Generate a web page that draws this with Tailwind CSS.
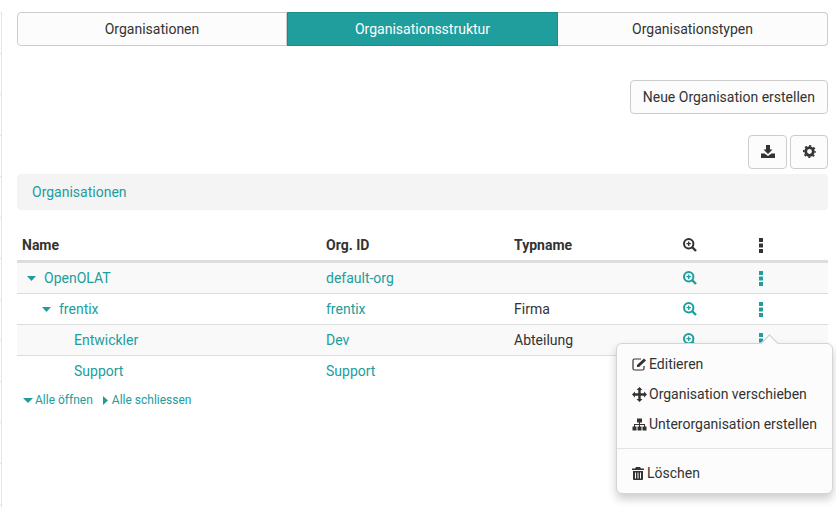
<!doctype html>
<html>

<head>
  <meta charset="UTF-8">
  <script src="https://cdn.jsdelivr.net/npm/@tailwindcss/browser@4"></script>
</head>

<body class="w-[836px] h-[508px] overflow-hidden bg-white font-['Roboto',sans-serif] text-sm text-[#333]">
  <div class="relative h-full flex">
    <!-- left sidebar edge, cut off by the crop -->
    <div class="w-0.5 h-full pt-3 shrink-0">
      <div class="border-r border-t border-[#e4e4e4] rounded-tr-sm h-full">
        <div class="h-[41px] border-b border-[#e4e4e4]"></div>
        <div class="h-[41px] border-b border-[#e4e4e4]"></div>
        <div class="h-[41px] border-b border-[#e4e4e4]"></div>
        <div class="h-[41px] border-b border-[#e4e4e4]"></div>
        <div class="h-[41px] border-b border-[#e4e4e4]"></div>
        <div class="h-[41px] border-b border-[#e4e4e4]"></div>
        <div class="h-[41px] border-b border-[#e4e4e4]"></div>
        <div class="h-[41px] border-b border-[#e4e4e4]"></div>
        <div class="h-[41px] border-b border-[#e4e4e4]"></div>
        <div class="h-[41px] border-b border-[#e4e4e4]"></div>
        <div class="h-[41px] border-b border-[#e4e4e4]"></div>
        <div class="h-[41px] border-b border-[#e4e4e4]"></div>
      </div>
    </div>

    <div class="flex-1 pl-[15px] pr-2 pt-3">
      <!-- tabs -->
      <div class="flex h-[34px]">
        <div class="w-[270px] flex items-center justify-center border border-[#ccc] rounded-l bg-[#fcfcfc]">Organisationen</div>
        <div class="w-[271px] flex items-center justify-center border border-[#1c8a87] bg-[#209d9d] text-white">Organisationsstruktur</div>
        <div class="flex-1 flex items-center justify-center border border-l-0 border-[#ccc] rounded-r bg-[#fcfcfc]">Organisationstypen</div>
      </div>

      <div class="flex justify-end mt-[34px]">
        <button class="h-[34px] px-3 border border-[#ccc] rounded bg-[#fcfcfc]">Neue Organisation erstellen</button>
      </div>

      <div class="flex justify-end gap-[3px] mt-[21px]">
        <button class="w-[39px] h-[34px] flex items-center justify-center border border-[#ccc] rounded bg-[#fcfcfc]">
          <svg class="-mt-0.5" width="14" height="13" viewBox="0 0 14 13" fill="#333"><path d="M5 0h4v4.500h2.500L7 9 2.500 4.500H5z"/><path d="M0 8.500h3.500L7 11l3.500-2.500H14V13H0z"/></svg>
        </button>
        <button class="w-[38px] h-[34px] flex items-center justify-center border border-[#ccc] rounded bg-[#fcfcfc]">
          <svg class="-mt-px" width="13" height="13" viewBox="0 0 24 24" fill="none" stroke="#333"><circle cx="12" cy="12" r="7" stroke-width="5"/><circle cx="12" cy="12" r="10.500" stroke-width="3" stroke-dasharray="4 4.250" stroke-dashoffset="2"/></svg>
        </button>
      </div>

      <div class="h-[36px] mt-[5px] px-[15px] flex items-center rounded bg-[#f4f4f4] text-[#209d9d]">Organisationen</div>

      <!-- tree table -->
      <div class="mt-[20px]">
        <div class="flex items-center h-[33px] border-b-[3px] border-[#ddd] font-bold">
          <div class="w-[304px] pl-[5px]">Name</div>
          <div class="w-[188px] pl-[5px]">Org. ID</div>
          <div class="w-[169px] pl-[5px]">Typname</div>
          <div class="w-[78px] pl-[5px] flex">
            <svg width="14" height="14" viewBox="0 0 14 14" fill="none" stroke="#333"><circle cx="5.700" cy="5.700" r="4.700" stroke-width="2"/><path d="M9 9l4 4" stroke-width="2.400"/><path d="M3.500 5.700h4.400M5.700 3.500v4.400" stroke-width="1.300"/></svg>
          </div>
          <div class="flex-1 flex pl-[3px]">
            <svg width="4" height="15" viewBox="0 0 4 15" fill="#333"><rect width="4" height="4"/><rect width="4" height="4" y="5.500"/><rect width="4" height="4" y="11"/></svg>
          </div>
        </div>

        <div class="flex items-center h-[31px] border-b border-[#ddd] bg-[#f9f9f9] text-[#209d9d]">
          <div class="w-[304px] pl-[10px] flex items-center gap-2">
            <svg width="9" height="5" viewBox="0 0 9 5" fill="#209d9d"><path d="M0 0h9L4.500 5z"/></svg>
            <span>OpenOLAT</span>
          </div>
          <div class="w-[188px] pl-[5px]">default-org</div>
          <div class="w-[169px] pl-[5px] text-[#333]"></div>
          <div class="w-[78px] pl-[5px] flex">
            <svg width="14" height="14" viewBox="0 0 14 14" fill="none" stroke="#209d9d"><circle cx="5.700" cy="5.700" r="4.700" stroke-width="2"/><path d="M9 9l4 4" stroke-width="2.400"/><path d="M3.500 5.700h4.400M5.700 3.500v4.400" stroke-width="1.300"/></svg>
          </div>
          <div class="flex-1 flex pl-[3px]">
            <svg width="4" height="15" viewBox="0 0 4 15" fill="#209d9d"><rect width="4" height="4"/><rect width="4" height="4" y="5.500"/><rect width="4" height="4" y="11"/></svg>
          </div>
        </div>

        <div class="flex items-center h-[31px] border-b border-[#ddd] text-[#209d9d]">
          <div class="w-[304px] pl-[25px] flex items-center gap-2">
            <svg width="9" height="5" viewBox="0 0 9 5" fill="#209d9d"><path d="M0 0h9L4.500 5z"/></svg>
            <span>frentix</span>
          </div>
          <div class="w-[188px] pl-[5px]">frentix</div>
          <div class="w-[169px] pl-[5px] text-[#333]">Firma</div>
          <div class="w-[78px] pl-[5px] flex">
            <svg width="14" height="14" viewBox="0 0 14 14" fill="none" stroke="#209d9d"><circle cx="5.700" cy="5.700" r="4.700" stroke-width="2"/><path d="M9 9l4 4" stroke-width="2.400"/><path d="M3.500 5.700h4.400M5.700 3.500v4.400" stroke-width="1.300"/></svg>
          </div>
          <div class="flex-1 flex pl-[3px]">
            <svg width="4" height="15" viewBox="0 0 4 15" fill="#209d9d"><rect width="4" height="4"/><rect width="4" height="4" y="5.500"/><rect width="4" height="4" y="11"/></svg>
          </div>
        </div>

        <div class="flex items-center h-[31px] border-b border-[#ddd] bg-[#f9f9f9] text-[#209d9d]">
          <div class="w-[304px] pl-[57px]">Entwickler</div>
          <div class="w-[188px] pl-[5px]">Dev</div>
          <div class="w-[169px] pl-[5px] text-[#333]">Abteilung</div>
          <div class="w-[78px] pl-[5px] flex">
            <svg width="14" height="14" viewBox="0 0 14 14" fill="none" stroke="#209d9d"><circle cx="5.700" cy="5.700" r="4.700" stroke-width="2"/><path d="M9 9l4 4" stroke-width="2.400"/><path d="M3.500 5.700h4.400M5.700 3.500v4.400" stroke-width="1.300"/></svg>
          </div>
          <div class="flex-1 flex pl-[3px]">
            <svg width="4" height="15" viewBox="0 0 4 15" fill="#209d9d"><rect width="4" height="4"/><rect width="4" height="4" y="5.500"/><rect width="4" height="4" y="11"/></svg>
          </div>
        </div>

        <div class="flex items-center h-[30px] text-[#209d9d]">
          <div class="w-[304px] pl-[57px]">Support</div>
          <div class="w-[188px] pl-[5px]">Support</div>
        </div>

        <div class="flex items-center gap-[10px] mt-[6px] pl-[6px] text-xs text-[#209d9d]">
          <span class="flex items-center gap-[2px]">
            <svg width="10" height="5" viewBox="0 0 10 5" fill="#209d9d"><path d="M0 0h10L5 5z"/></svg>
            Alle öffnen
          </span>
          <span class="flex items-center gap-[4px]">
            <svg width="5" height="9" viewBox="0 0 5 9" fill="#209d9d"><path d="M0 0l5 4.500L0 9z"/></svg>
            Alle schliessen
          </span>
        </div>
      </div>
    </div>

    <!-- popover menu -->
    <div class="absolute left-[616px] top-[343px] w-[217px] h-[151px] rounded-md border border-[#d4d4d4] bg-[#fcfcfc] shadow-[0_5px_10px_rgba(0,0,0,0.2)]">
      <div class="absolute right-[56px] -top-[7px] w-[13px] h-[13px] rotate-45 border-l border-t border-[#ccc] bg-[#fcfcfc]"></div>
      <div class="relative pt-[5px]">
        <div class="flex items-center h-[30px] pl-[15px] gap-[2px]">
          <svg width="15" height="13" viewBox="0 0 15 13" fill="none" stroke="#333"><path d="M12 8v2.500A1.500 1.500 0 0 1 10.500 12h-8A1.500 1.500 0 0 1 1 10.500v-8A1.500 1.500 0 0 1 2.500 1H9" stroke-width="1.200"/><path d="M5 7l7-6.500 2 2L7 9H5z" fill="#333" stroke="none"/></svg>
          <span>Editieren</span>
        </div>
        <div class="flex items-center h-[30px] pl-[15px] gap-[2px]">
          <svg width="15" height="15" viewBox="0 0 15 15" fill="#333"><path d="M7.500 0l3 3H8.700v3.300H12V4.500l3 3-3 3V8.700H8.700V12h1.800l-3 3-3-3h1.800V8.700H3v1.800l-3-3 3-3v1.800h3.300V3H4.500z"/></svg>
          <span>Organisation verschieben</span>
        </div>
        <div class="flex items-center h-[30px] pl-[15px] gap-[2px]">
          <svg width="15" height="13" viewBox="0 0 15 13" fill="#333"><rect x="5" y="0.500" width="5" height="4"/><rect x="0.500" y="8.500" width="4" height="4"/><rect x="5.500" y="8.500" width="4" height="4"/><rect x="10.500" y="8.500" width="4" height="4"/><path d="M7 4h1v2h5v3h-1V7H8v2H7V7H3v2H2V6h5z"/></svg>
          <span>Unterorganisation erstellen</span>
        </div>
        <div class="h-px bg-[#e4e4e4] mt-[9px] mb-[9px]"></div>
        <div class="flex items-center h-[30px] pl-[15px] gap-[3px]">
          <svg width="12" height="13" viewBox="0 0 12 13" fill="#333"><path d="M4 0h4l1 1.500h3V3H0V1.500h3z"/><path fill-rule="evenodd" d="M1 4h10v8a1 1 0 0 1-1 1H2a1 1 0 0 1-1-1zM3 5.500v6h1v-6zM5.500 5.500v6h1v-6zM8 5.500v6h1v-6z"/></svg>
          <span>Löschen</span>
        </div>
      </div>
    </div>
  </div>
</body>

</html>
